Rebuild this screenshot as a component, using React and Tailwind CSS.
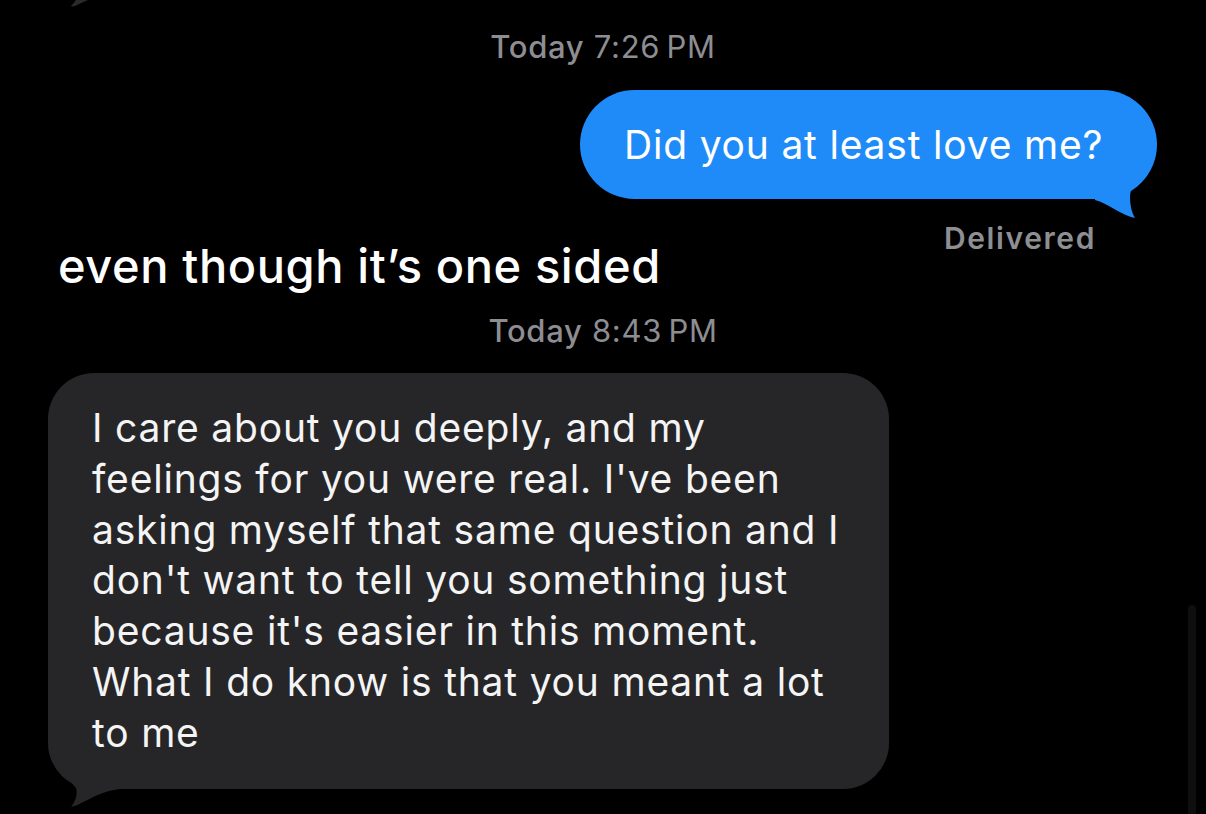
import React from "react";

const lines = [
  "I care about you deeply, and my",
  "feelings for you were real. I've been",
  "asking myself that same question and I",
  "don't want to tell you something just",
  "because it's easier in this moment.",
  "What I do know is that you meant a lot",
  "to me",
];

export default function App() {
  return (
    <div
      className="relative w-[1206px] h-[814px] bg-black overflow-hidden flex flex-col"
      style={{ fontFamily: "Inter, 'Noto Sans', sans-serif" }}
    >
      {/* tail of previous bubble */}
      <svg className="absolute left-[66px] top-0" width="30" height="10" viewBox="0 0 30 10">
        <path d="M5 6 Q7 7.5 12 4.5 L22 0 L10 0 Q8 3 5 6 Z" fill="#2a2a2d" />
      </svg>

      {/* scrollbar */}
      <div className="absolute right-[10px] top-[605px] w-[8px] h-[240px] rounded-full bg-[#0e0e0e]" />

      <div className="pt-[29px] flex justify-center">
        <div className="text-[31px] leading-[36px] text-[#8d8d92] tracking-[0.7px]">
          <span className="font-medium">Today</span> <span>7:26&#8201;PM</span>
        </div>
      </div>

      <div className="mt-[25px] flex justify-end pr-[49px]">
        <div className="relative w-[577px] h-[109px] rounded-[55px] bg-[#1f8bf9] flex items-center pl-[44px]">
          <svg className="absolute left-[510px] top-[60px]" width="70" height="70" viewBox="0 0 70 70">
            <path
              d="M5 50 L5 35 L62 9 C50 24 41 34 40 46 C40 56 42 63 45 68 C30 65 18 53 5 50 Z"
              fill="#1f8bf9"
            />
          </svg>
          <span className="relative text-[39px] leading-[48px] text-white tracking-[0.8px]">
            Did you at least love me?
          </span>
        </div>
      </div>

      <div className="flex justify-between pl-[58px] pr-[110px]">
        <div className="mt-[39px] text-[47px] leading-[56px] font-medium text-white tracking-[0.6px]">
          even though it’s one sided
        </div>
        <div className="mt-[21px] text-[30px] leading-[36px] font-semibold text-[#8e8e93] tracking-[1.6px]">
          Delivered
        </div>
      </div>

      <div className="mt-[19px] flex justify-center">
        <div className="text-[31px] leading-[36px] text-[#8d8d92] tracking-[0.7px]">
          <span className="font-medium">Today</span> <span>8:43&#8201;PM</span>
        </div>
      </div>

      <div className="mt-[24px] pl-[48px]">
        <div className="relative w-[841px] h-[416px] rounded-[46px] bg-[#262629] pl-[44px] pt-[30px]">
          <svg className="absolute left-[-8px] top-[367px]" width="90" height="70" viewBox="0 0 90 70">
            <path
              d="M12 5 C14 30 30 40 36 48 C38 55 35 62 31 67 C45 64 55 52 80 49 L80 5 Z"
              fill="#262629"
            />
          </svg>
          <div className="relative text-[39px] leading-[50.8px] text-[#f4f4f4] tracking-[0.8px]">
            {lines.map((l, i) => (
              <div key={i} className="whitespace-nowrap">
                {l}
              </div>
            ))}
          </div>
        </div>
      </div>
    </div>
  );
}
